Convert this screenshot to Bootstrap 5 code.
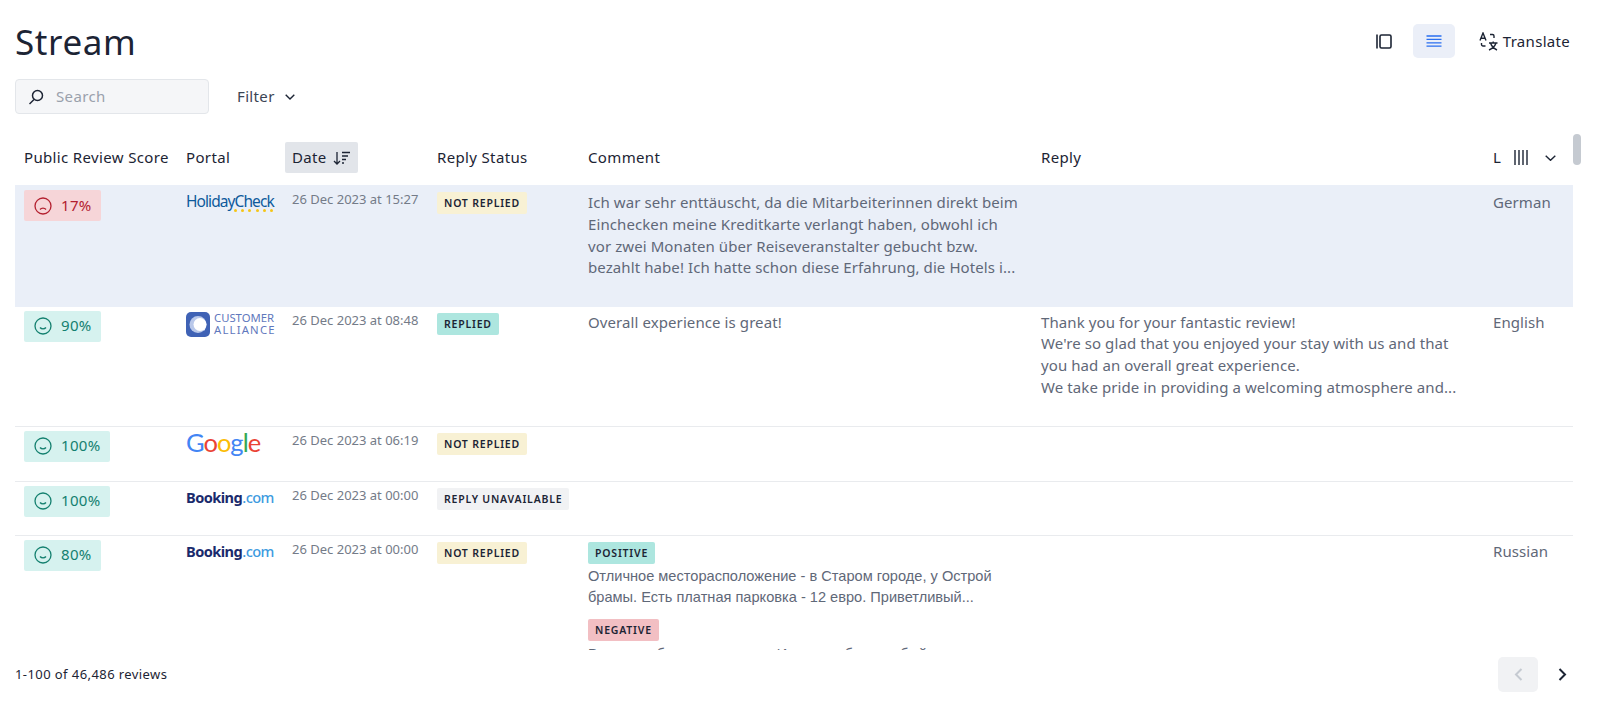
<!DOCTYPE html>
<html lang="en">
<head>
<meta charset="utf-8">
<title>Stream</title>
<link href="https://cdn.jsdelivr.net/npm/bootstrap@5.3.0/dist/css/bootstrap.min.css" rel="stylesheet">
<style>
html,body{height:710px;overflow:hidden;}
body{font-family:"Noto Sans","Liberation Sans",sans-serif;color:#1c2434;background:#fff;}
.page-wrap{padding:0 0 0 15px;height:710px;width:1600px;}
.top-bar{height:79px;padding-right:30px;padding-top:3px;}
.page-title{font-size:35px;font-weight:400;line-height:42px;margin:2px 0 0;letter-spacing:.6px;color:#1c2434;}
.icon-plain{width:42px;height:34px;padding:0;border:0;background:transparent;display:flex;align-items:center;justify-content:center;border-radius:5px;}
.icon-on{background:#ebeff8;margin-left:8px;}
.btn-translate{font-size:15px;letter-spacing:.3px;padding:0;border:0;background:transparent;color:#1c2434;margin-left:24px;}
.filter-row{height:55px;}
.search-box{width:194px;height:35px;background:#f5f6f8;border:1px solid #e3e6ea;border-radius:4px;padding:0 12px;}
.search-field{border:0;background:transparent;outline:0;width:130px;font-size:15px;letter-spacing:.35px;padding:0;color:#1c2434;}
.search-field::placeholder{color:#9aa1ac;}
.btn-filter{font-size:15px;letter-spacing:.35px;padding:0;border:0;background:transparent;color:#3b4454;margin-left:28px;height:35px;}
.filter-chev{margin-left:10px;}
.grid-zone{position:relative;height:516px;width:1566px;overflow:hidden;}
.review-grid{table-layout:fixed;width:1558px;margin:0;border-collapse:collapse;}
.review-grid th{font-size:15px;letter-spacing:.35px;font-weight:400;height:51px;padding:0 0 4px 9px;border:0;color:#1c2434;vertical-align:middle;white-space:nowrap;}
.review-grid td{padding:4px 0 0 9px;font-size:15px;letter-spacing:.09px;line-height:21.8px;color:#5f6878;border-bottom:1px solid #e9ebee;vertical-align:top;background:transparent;}
.review-grid .row-on td{background:#eaeff8;border-bottom-color:#eaeff8;height:121px;padding-top:5px;}
.row-tall td{height:120px;}
.row-mid td{height:55px;}
.row-short td{height:54px;}
.date-chip{background:#e2e5ea;height:31px;margin-left:-7px;padding:0 7px;border-radius:2px;}
.sort-mark{margin-left:6px;}
.score-chip{height:31px;padding:0 9px 0 10px;border-radius:2px;font-size:15px;letter-spacing:.35px;}
.score-low{background:#f6d5d8;color:#b3202f;}
.score-high{background:#d6f2ef;color:#14806f;}
.face-mark{margin-right:9px;}
.date-text{font-size:13px;letter-spacing:0;line-height:20px;white-space:nowrap;color:#747b88;margin-top:-1px;}
.state-tag{display:inline-block;font-size:10.5px;font-weight:600;letter-spacing:.8px;line-height:22px;height:22px;padding:0 7px;border-radius:2px;color:#1c2434;text-transform:uppercase;white-space:nowrap;margin-top:2px;}
.tag-wait{background:#f8f1d4;}
.tag-done{background:#ade6df;}
.tag-none{background:#f1f2f4;}
.tag-neg{background:#f2bfc3;}
.text-block{margin:1px 20px 0 0;}
.row-on .text-block{margin-top:2px;}
.text-wide{margin-right:8px;}
.text-flush{margin-right:0;}
.text-cyr{font-family:"Liberation Sans",sans-serif;font-size:14.6px;letter-spacing:0;margin-top:2px;}
.text-clipped{margin-top:3px;}
.logo-holiday{font-size:15.5px;letter-spacing:-.92px;color:#0e5a9c;line-height:18px;margin-top:2px;white-space:nowrap;}
.star-row{gap:4.2px;justify-content:flex-end;width:87px;margin-top:-1px;}
.star-dot{width:3px;height:3px;border-radius:50%;background:#f5c518;}
.logo-ca{gap:4px;margin-top:1px;}
.ca-words{font-size:11.3px;line-height:12px;color:#5f78bd;font-weight:400;letter-spacing:0;white-space:nowrap;}
.ca-wide{letter-spacing:1.2px;}
.logo-google{font-family:"Lato",sans-serif;font-size:25.5px;line-height:30px;letter-spacing:-1px;margin-top:-4px;white-space:nowrap;}
.g-b{color:#4285f4}.g-r{color:#ea4335}.g-y{color:#fbbc05}.g-g{color:#34a853}
.logo-booking{font-size:14.6px;font-weight:700;line-height:20px;letter-spacing:-.55px;color:#1a2a6c;margin-top:1px;white-space:nowrap;}
.logo-booking span{color:#3d9be0;font-weight:500;}
.gap-tag{margin-top:10px;}
.lang-bars{margin-left:13px;}
.lang-chev{margin-left:17px;}
.scroll-thumb{position:absolute;right:0;top:0;width:8px;height:31px;background:#c5cad1;border-radius:4px;}
.foot-bar{height:49px;width:1565px;}
.foot-text{font-size:13px;letter-spacing:.42px;color:#1c2434;}
.pager-off{width:40px;height:35px;border:0;padding:0;background:#f1f2f4;border-radius:5px;display:flex;align-items:center;justify-content:center;}
.pager-on{width:36px;height:35px;border:0;padding:0;background:transparent;display:flex;align-items:center;justify-content:center;margin-left:6px;}
</style>
</head>
<body>
<div class="page-wrap">
  <div class="top-bar d-flex justify-content-between align-items-center">
    <h1 class="page-title">Stream</h1>
    <div class="d-flex align-items-center">
      <button class="icon-plain" aria-label="Split view"><svg width="16" height="15" viewBox="0 0 16 15" fill="none" stroke="#1c2434" stroke-width="1.6"><path d="M1 .5v14"/><rect x="4" y="1" width="11" height="13" rx="1.5"/></svg></button>
      <button class="icon-plain icon-on" aria-label="List view"><svg width="16" height="12" viewBox="0 0 16 12" fill="none" stroke="#2a6ff0" stroke-width="1.3"><path d="M.5 1h15M.5 4.400h15M.5 7.800h15M.5 11.200h15"/></svg></button>
      <button class="btn-translate d-flex align-items-center"><svg width="20" height="19" viewBox="0 0 20 19" fill="none" stroke="#1c2434" stroke-width="1.4" class="me-1"><path d="M1 8.500 4 1l3 7.500M2 6.300h4"/><path d="M11 2.500h2.500a1.500 1.500 0 0 1 1.500 1.500v2"/><path d="M2.500 11v1.500A1.500 1.500 0 0 0 4 14h2.500"/><path d="M10 11h8.500M14.200 9.500V11M11.500 11c1 3 3.500 5.500 6.500 7M17 11c-1 3-3.500 5.500-7 7"/></svg>Translate</button>
    </div>
  </div>
  <div class="filter-row d-flex align-items-start">
    <div class="search-box d-flex align-items-center">
      <svg width="16" height="16" viewBox="0 0 16 16" fill="none" stroke="#1c2434" stroke-width="1.5" class="me-2 flex-shrink-0"><circle cx="9.500" cy="6.500" r="5"/><path d="M6 10.500 1.500 15"/></svg>
      <input class="search-field ms-1" placeholder="Search" aria-label="Search">
    </div>
    <button class="btn-filter d-flex align-items-center">Filter<svg width="10" height="6" viewBox="0 0 10 6" fill="none" stroke="#1c2434" stroke-width="1.4" class="filter-chev"><path d="M.7.7 5 5l4.300-4.300"/></svg></button>
  </div>
  <div class="grid-zone">
    <table class="table review-grid">
      <colgroup><col style="width:162px"><col style="width:106px"><col style="width:145px"><col style="width:151px"><col style="width:453px"><col style="width:452px"><col style="width:89px"></colgroup>
      <thead><tr>
        <th>Public Review Score</th>
        <th>Portal</th>
        <th><span class="date-chip d-inline-flex align-items-center">Date<svg width="18" height="14" viewBox="0 0 18 14" fill="none" stroke="#1c2434" stroke-width="1.3" class="sort-mark"><path d="M4 1v12M1 10l3 3 3-3"/><path d="M9 1.500h8M9 5h6M9 8.500h4M9 12h2"/></svg></span></th>
        <th>Reply Status</th>
        <th>Comment</th>
        <th>Reply</th>
        <th><div class="d-flex align-items-center"><span>L</span><svg width="14" height="15" viewBox="0 0 14 15" fill="none" stroke="#1c2434" stroke-width="1.4" class="lang-bars"><path d="M1 0v15M5 0v15M9 0v15M13 0v15"/></svg><svg width="11" height="6" viewBox="0 0 11 6" fill="none" stroke="#1c2434" stroke-width="1.4" class="lang-chev"><path d="M.7.7l4.800 4.600L10.300.7"/></svg></div></th>
      </tr></thead>
      <tbody>
        <tr class="row-on">
          <td><span class="score-chip score-low d-inline-flex align-items-center"><svg width="18" height="18" viewBox="0 0 18 18" fill="none" stroke="currentColor" stroke-width="1.300" class="face-mark"><circle cx="9" cy="9" r="8"/><path d="M6 12.500c1.500-1.800 4.500-1.800 6 0"/></svg>17%</span></td>
          <td><div class="logo-holiday">HolidayCheck</div><div class="star-row d-flex"><i class="star-dot"></i><i class="star-dot"></i><i class="star-dot"></i><i class="star-dot"></i><i class="star-dot"></i><i class="star-dot"></i></div></td>
          <td><div class="date-text">26 Dec 2023 at 15:27</div></td>
          <td><span class="state-tag tag-wait">Not replied</span></td>
          <td><div class="text-block text-wide">Ich war sehr enttäuscht, da die Mitarbeiterinnen direkt beim Einchecken meine Kreditkarte verlangt haben, obwohl ich vor zwei Monaten über Reiseveranstalter gebucht bzw. bezahlt habe! Ich hatte schon diese Erfahrung, die Hotels i...</div></td>
          <td></td>
          <td><div class="text-block text-flush">German</div></td>
        </tr>
        <tr class="row-tall">
          <td><span class="score-chip score-high d-inline-flex align-items-center"><svg width="18" height="18" viewBox="0 0 18 18" fill="none" stroke="currentColor" stroke-width="1.300" class="face-mark"><circle cx="9" cy="9" r="8"/><path d="M6 10.500c1.500 1.800 4.500 1.800 6 0"/></svg>90%</span></td>
          <td><div class="logo-ca d-flex align-items-center"><svg width="24" height="25" viewBox="0 0 24 25"><rect width="24" height="25" rx="5" fill="#3f62b5"/><circle cx="12" cy="12.500" r="8.500" fill="#b9c8ea"/><circle cx="14" cy="12.500" r="6.500" fill="#fff"/><path d="M16 17l3 1.500-1-3.500z" fill="#fff"/></svg><div class="ca-words">CUSTOMER<br><span class="ca-wide">ALLIANCE</span></div></div></td>
          <td><div class="date-text">26 Dec 2023 at 08:48</div></td>
          <td><span class="state-tag tag-done">Replied</span></td>
          <td><div class="text-block">Overall experience is great!</div></td>
          <td><div class="text-block">Thank you for your fantastic review!<br>We're so glad that you enjoyed your stay with us and that you had an overall great experience.<br>We take pride in providing a welcoming atmosphere and...</div></td>
          <td><div class="text-block text-flush">English</div></td>
        </tr>
        <tr class="row-mid">
          <td><span class="score-chip score-high d-inline-flex align-items-center"><svg width="18" height="18" viewBox="0 0 18 18" fill="none" stroke="currentColor" stroke-width="1.300" class="face-mark"><circle cx="9" cy="9" r="8"/><path d="M6 10.500c1.500 1.800 4.500 1.800 6 0"/></svg>100%</span></td>
          <td><div class="logo-google"><span class="g-b">G</span><span class="g-r">o</span><span class="g-y">o</span><span class="g-b">g</span><span class="g-g">l</span><span class="g-r">e</span></div></td>
          <td><div class="date-text">26 Dec 2023 at 06:19</div></td>
          <td><span class="state-tag tag-wait">Not replied</span></td>
          <td></td><td></td><td></td>
        </tr>
        <tr class="row-short">
          <td><span class="score-chip score-high d-inline-flex align-items-center"><svg width="18" height="18" viewBox="0 0 18 18" fill="none" stroke="currentColor" stroke-width="1.300" class="face-mark"><circle cx="9" cy="9" r="8"/><path d="M6 10.500c1.500 1.800 4.500 1.800 6 0"/></svg>100%</span></td>
          <td><div class="logo-booking">Booking<span>.com</span></div></td>
          <td><div class="date-text">26 Dec 2023 at 00:00</div></td>
          <td><span class="state-tag tag-none">Reply unavailable</span></td>
          <td></td><td></td><td></td>
        </tr>
        <tr>
          <td><span class="score-chip score-high d-inline-flex align-items-center"><svg width="18" height="18" viewBox="0 0 18 18" fill="none" stroke="currentColor" stroke-width="1.300" class="face-mark"><circle cx="9" cy="9" r="8"/><path d="M6 10.500c1.500 1.800 4.500 1.800 6 0"/></svg>80%</span></td>
          <td><div class="logo-booking">Booking<span>.com</span></div></td>
          <td><div class="date-text">26 Dec 2023 at 00:00</div></td>
          <td><span class="state-tag tag-wait">Not replied</span></td>
          <td>
            <span class="state-tag tag-done">Positive</span>
            <div class="text-block text-cyr">Отличное месторасположение - в Старом городе, у Острой брамы. Есть платная парковка - 12 евро. Приветливый...</div>
            <span class="state-tag tag-neg gap-tag">Negative</span>
            <div class="text-block text-cyr text-clipped">В номере было прохладно. Интернет был слабый</div>
          </td>
          <td></td>
          <td><div class="text-block text-flush">Russian</div></td>
        </tr>
      </tbody>
    </table>
    <div class="scroll-thumb"></div>
  </div>
  <div class="foot-bar d-flex justify-content-between align-items-center">
    <span class="foot-text">1-100 of 46,486 reviews</span>
    <div class="d-flex align-items-center">
      <button class="pager-off" aria-label="Previous" disabled><svg width="9" height="13" viewBox="0 0 9 13" fill="none" stroke="#c5cad1" stroke-width="2"><path d="M7.500 1 2 6.500 7.500 12"/></svg></button>
      <button class="pager-on" aria-label="Next"><svg width="9" height="13" viewBox="0 0 9 13" fill="none" stroke="#1c2434" stroke-width="2"><path d="M1.500 1 7 6.500 1.500 12"/></svg></button>
    </div>
  </div>
</div>
<script src="https://cdn.jsdelivr.net/npm/bootstrap@5.3.0/dist/js/bootstrap.bundle.min.js"></script>
</body>
</html>
